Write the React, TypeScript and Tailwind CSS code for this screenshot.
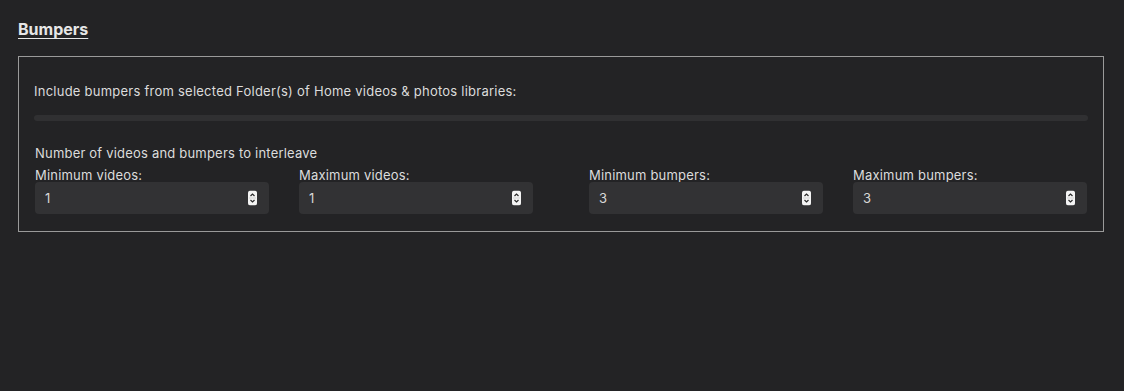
import { useState } from "react";

const Spinner = () => (
  <svg width="9" height="15" viewBox="0 0 9 15" className="pointer-events-none absolute right-[12px] top-1/2 -translate-y-1/2">
    <rect x="0" y="0" width="9" height="15" rx="2.5" fill="#f4f4f4" />
    <path d="M2.5 5.5 L4.5 3.5 L6.5 5.5" stroke="#2a2a2a" strokeWidth="1.2" fill="none" />
    <path d="M2.5 9.5 L4.5 11.5 L6.5 9.5" stroke="#2a2a2a" strokeWidth="1.2" fill="none" />
    <line x1="1" y1="7.5" x2="8" y2="7.5" stroke="#bdbdbd" strokeWidth="0.6" />
  </svg>
);

const NumberField = ({ label, initial }: { label: string; initial: number }) => {
  const [value, setValue] = useState(String(initial));
  return (
    <label className="flex w-[234px] flex-col">
      <span className="text-[13px] leading-[16px] tracking-[0.2px] text-[#dcdcdc]">{label}</span>
      <div className="relative -mt-[1px]">
        <input
          type="number"
          value={value}
          onChange={(e) => setValue(e.target.value)}
          className="h-[32px] w-full rounded-[4px] bg-[#323234] pl-[10px] text-[13px] text-[#d8d8d8] outline-none [appearance:textfield] [&::-webkit-inner-spin-button]:appearance-none [&::-webkit-outer-spin-button]:appearance-none"
        />
        <Spinner />
      </div>
    </label>
  );
};

const App = () => {
  return (
    <div className="min-h-[391px] w-full bg-[#232325] pl-[18px] pr-[20px] pt-[19px] font-['Inter',sans-serif] text-[#dcdcdc]">
      <h2 className="text-[16px] font-bold leading-[20px] text-[#e6e6e6] underline underline-offset-[3px]">
        Bumpers
      </h2>
      <div className="mt-[17px] border border-[#9a9a9a] px-[15px] pb-[17px] pt-[26px]">
        <p className="text-[13px] leading-[16px] tracking-[0.24px]">
          Include bumpers from selected Folder(s) of Home videos &amp; photos libraries:
        </p>
        <div className="mt-[16px] h-[6px] w-full rounded-full bg-[#303032]" />
        <p className="ml-[1px] mt-[24px] text-[13px] leading-[16px] tracking-[0.2px]">
          Number of videos and bumpers to interleave
        </p>
        <div className="ml-[1px] mt-[6px] flex justify-between">
          <div className="flex w-[498px] justify-between">
            <NumberField label="Minimum videos:" initial={1} />
            <NumberField label="Maximum videos:" initial={1} />
          </div>
          <div className="mr-[1px] flex w-[498px] justify-between">
            <NumberField label="Minimum bumpers:" initial={3} />
            <NumberField label="Maximum bumpers:" initial={3} />
          </div>
        </div>
      </div>
    </div>
  );
};

export default App;
